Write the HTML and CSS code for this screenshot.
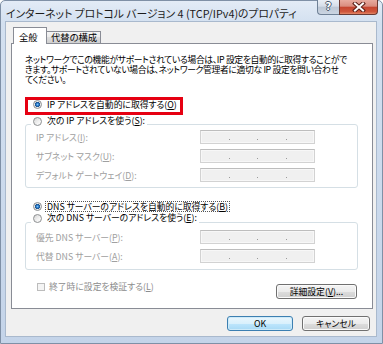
FILE: index.html
```html
<!DOCTYPE html>
<html lang="ja">
<head>
<meta charset="utf-8">
<title>IPv4 プロパティ</title>
<link rel="stylesheet" href="styles.css">
</head>
<body>
<div class="window">
  <div class="titlebar">
    <div class="title">インターネット プロトコル バージョン 4 (TCP/IPv4)のプロパティ</div>
    <div class="caption-btns">
      <div class="cbtn help"><span class="q">?</span></div>
      <div class="cbtn close">
        <svg width="14" height="10" viewBox="0 0 14 10">
          <path d="M3 1.5 L11 8.5 M11 1.5 L3 8.5" stroke="#5a1f17" stroke-width="4" stroke-linecap="square"/>
          <path d="M3 1.5 L11 8.5 M11 1.5 L3 8.5" stroke="#ffffff" stroke-width="2" stroke-linecap="square"/>
        </svg>
      </div>
    </div>
  </div>
  <div class="client">
    <div class="tabs">
      <div class="tab active">全般</div>
      <div class="tab">代替の構成</div>
    </div>
    <div class="panel">
      <p class="desc">ネットワークでこの機能がサポートされている場合は、IP 設定を自動的に取得することがで<br>きます。サポートされていない場合は、ネットワーク管理者に適切な IP 設定を問い合わせ<br>てください。</p>
      <div class="highlight"><span class="radio on"></span><span class="opt-text">IP アドレスを自動的に取得する(<u>O</u>)</span></div>
      <div class="legend"><span class="radio"></span><span class="opt-text">次の IP アドレスを使う(<u>S</u>):</span></div>
      <div class="group ip">
        <span class="lbl">IP アドレス(<u>I</u>):</span>
        <div class="field"><i class="seg"></i><i class="dot"></i><i class="seg"></i><i class="dot"></i><i class="seg"></i><i class="dot"></i><i class="seg"></i></div>
        <span class="lbl">サブネット マスク(<u>U</u>):</span>
        <div class="field"><i class="seg"></i><i class="dot"></i><i class="seg"></i><i class="dot"></i><i class="seg"></i><i class="dot"></i><i class="seg"></i></div>
        <span class="lbl">デフォルト ゲートウェイ(<u>D</u>):</span>
        <div class="field"><i class="seg"></i><i class="dot"></i><i class="seg"></i><i class="dot"></i><i class="seg"></i><i class="dot"></i><i class="seg"></i></div>
      </div>
      <div class="option"><span class="radio on"></span><span class="opt-text focus">DNS サーバーのアドレスを自動的に取得する(<u>B</u>)</span></div>
      <div class="legend"><span class="radio"></span><span class="opt-text">次の DNS サーバーのアドレスを使う(<u>E</u>):</span></div>
      <div class="group dns">
        <span class="lbl">優先 DNS サーバー(<u>P</u>):</span>
        <div class="field"><i class="seg"></i><i class="dot"></i><i class="seg"></i><i class="dot"></i><i class="seg"></i><i class="dot"></i><i class="seg"></i></div>
        <span class="lbl">代替 DNS サーバー(<u>A</u>):</span>
        <div class="field"><i class="seg"></i><i class="dot"></i><i class="seg"></i><i class="dot"></i><i class="seg"></i><i class="dot"></i><i class="seg"></i></div>
      </div>
      <div class="bottom-row">
        <div class="check"><span class="box"></span><span>終了時に設定を検証する(<u>L</u>)</span></div>
        <button class="btn adv">詳細設定(<u>V</u>)...</button>
      </div>
    </div>
    <div class="footer">
      <button class="btn ok">OK</button>
      <button class="btn cancel">キャンセル</button>
    </div>
  </div>
</div>
</body>
</html>
```

FILE: styles.css
```css
html, body {
  margin: 0;
  padding: 0;
  background: #ffffff;
}
body {
  font-family: "Noto Sans CJK JP", "Noto Sans", sans-serif;
  font-size: 8.8px;
  font-feature-settings: "palt";
  color: #000;
}
u {
  text-decoration: underline;
  text-underline-offset: 1px;
  text-decoration-thickness: 1px;
}
.window {
  width: 383px;
  height: 344px;
  box-sizing: border-box;
  border: 1px solid #7f90a6;
  border-radius: 5px 5px 0 0;
  background: linear-gradient(to bottom, #e3ebf6 0, #d3e0f0 22px, #c4d4e9 100%);
  padding: 0 6px 7px 5px;
  display: flex;
  flex-direction: column;
}
.titlebar {
  height: 21px;
  display: flex;
  align-items: flex-start;
}
.title {
  margin-top: 5px;
  line-height: 14px;
  font-size: 10.8px;
  color: #1b1b1b;
  white-space: nowrap;
}
.caption-btns {
  margin-left: auto;
  margin-right: -2px;
  margin-top: -1px;
  display: flex;
}
.cbtn {
  height: 15px;
  box-sizing: border-box;
  display: flex;
  align-items: center;
  justify-content: center;
}
.help {
  width: 22px;
  border: 1px solid #6f8196;
  border-top: none;
  border-right: none;
  border-radius: 0 0 0 4px;
  background: linear-gradient(to bottom, #e9eef5 0, #d5dde8 45%, #bcc7d5 50%, #cbd5e2 100%);
}
.q {
  font-family: "DejaVu Sans", sans-serif;
  font-weight: bold;
  font-size: 10px;
  line-height: 12px;
  color: #ffffff;
  text-shadow: 1px 0 0 #4b5a6d, -1px 0 0 #4b5a6d, 0 1px 0 #4b5a6d, 0 -1px 0 #4b5a6d;
}
.close {
  width: 39px;
  border: 1px solid #6b3a33;
  border-top: none;
  border-radius: 0 0 4px 0;
  background: linear-gradient(to bottom, #e8ab9f 0, #d98c7e 45%, #c5442f 50%, #d0583d 85%, #e3896a 100%);
}
.client {
  height: 314px;
  box-sizing: border-box;
  background: #f0f0f0;
  box-shadow: 0 0 0 1px #a9b9cd;
  padding: 5px 3px 0 5px;
  display: flex;
  flex-direction: column;
}
.tabs {
  height: 17px;
  display: flex;
  align-items: flex-end;
  padding-left: 2px;
  margin-bottom: -1px;
  position: relative;
  z-index: 1;
}
.tab {
  box-sizing: border-box;
  border: 1px solid #898c95;
  border-bottom: none;
  white-space: nowrap;
  font-size: 9.3px;
}
.tab.active {
  width: 34px;
  height: 17px;
  background: #ffffff;
  padding: 2px 0 0 5px;
  line-height: 14px;
}
.tab:not(.active) {
  width: 54px;
  height: 12px;
  margin-bottom: 1px;
  border-left: none;
  padding-left: 4px;
  line-height: 11px;
  background: linear-gradient(to bottom, #f4f4f4 0, #ebebeb 50%, #dddddd 50%, #cfcfcf 100%);
}
.panel {
  height: 266px;
  box-sizing: border-box;
  background: #ffffff;
  border: 1px solid #898c95;
  display: flex;
  flex-direction: column;
}
.desc {
  margin: 11px 0 0 13px;
  line-height: 10px;
  white-space: nowrap;
  letter-spacing: -0.35px;
}
.radio {
  flex: none;
  width: 9px;
  height: 9px;
  box-sizing: border-box;
  border-radius: 50%;
  border: 1px solid #8d8f91;
  background: linear-gradient(135deg, #d6d6d6 0, #f2f2f2 60%, #ffffff 100%);
}
.radio.on {
  background: radial-gradient(circle at 50% 50%, #7fc4f4 0, #2a7ccd 1.3px, #1c4f86 2.4px, #eeeeee 2.9px, #d9d9d9 100%);
}
.opt-text {
  white-space: nowrap;
  margin-left: 5px;
}
.highlight {
  margin: 12px 0 0 13px;
  width: 158px;
  height: 18px;
  box-sizing: border-box;
  border: 3px solid #e60012;
  padding: 0 0 4px 5px;
  display: flex;
  align-items: center;
}
.legend {
  align-self: flex-start;
  height: 12px;
  margin-left: 19px;
  padding: 0 2px;
  background: #ffffff;
  display: flex;
  align-items: center;
  position: relative;
  z-index: 1;
  line-height: 12px;
}
.option {
  align-self: flex-start;
  height: 12px;
  margin: 12px 0 0 21px;
  display: flex;
  align-items: center;
  line-height: 9px;
}
.focus {
  margin-left: 3px;
  padding: 0 1px;
  border: 1px dotted #555;
}
.group {
  margin: -3px 14px 0 13px;
  border: 1px solid #d5dfe5;
  border-radius: 3px;
  display: grid;
  grid-template-columns: 164px 115px;
  row-gap: 5px;
  align-items: center;
  padding: 5px 0 5px 10px;
}
.group.dns {
  margin-top: -2px;
  padding: 7px 0 6px 10px;
}
.lbl {
  color: #a0a0a0;
  white-space: nowrap;
  line-height: 12px;
  padding-top: 2px;
}
.field {
  height: 14px;
  box-sizing: border-box;
  border: 1px solid #d2d2d2;
  border-top-color: #bdbdbd;
  background: #f0f0f0;
  box-shadow: inset 0 0 0 1px #f7f7f7;
  display: flex;
  align-items: flex-end;
  padding-bottom: 3px;
}
.seg {
  flex: 1;
}
.dot {
  width: 1px;
  height: 1px;
  background: #9a9a9a;
}
.bottom-row {
  margin-top: 14px;
  height: 15px;
  display: flex;
  align-items: flex-start;
}
.check {
  margin: -2px 0 0 25px;
  height: 10px;
  line-height: 10px;
  display: flex;
  align-items: center;
  color: #8c8c8c;
  white-space: nowrap;
}
.box {
  width: 8px;
  height: 8px;
  box-sizing: border-box;
  border: 1px solid #bcbcbc;
  background: #f4f4f4;
  margin-right: 4px;
}
.btn {
  font: inherit;
  font-feature-settings: "palt";
  height: 15px;
  box-sizing: border-box;
  border: 1px solid #707070;
  border-radius: 3px;
  background: linear-gradient(to bottom, #f4f4f4 0, #ebebeb 50%, #dddddd 50%, #cfcfcf 100%);
  box-shadow: inset 0 0 0 1px #fafafa;
  padding: 0;
  line-height: 12px;
  color: #000;
  text-align: center;
}
.btn.adv {
  margin-left: auto;
  margin-right: 15px;
  width: 81px;
}
.footer {
  margin: 7px 3px 0 0;
  display: flex;
  justify-content: flex-end;
  gap: 9px;
}
.btn.ok {
  width: 66px;
  border-color: #3c7fb1;
  background: linear-gradient(to bottom, #eaf6fd 0, #d9f0fc 50%, #bee6fd 50%, #a7d9f5 100%);
  box-shadow: inset 0 0 0 1px #cdeaf9;
}
.btn.cancel {
  width: 68px;
}
```
